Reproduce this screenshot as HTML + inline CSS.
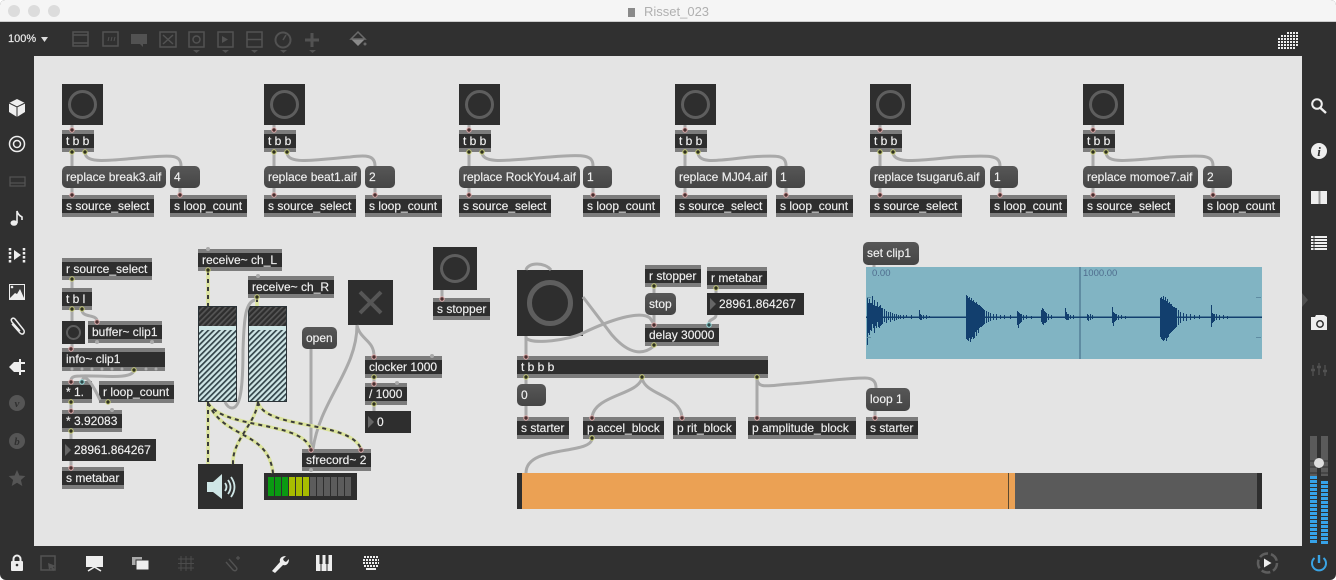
<!DOCTYPE html>
<html><head><meta charset="utf-8"><style>
html,body{margin:0;padding:0;width:1336px;height:580px;overflow:hidden;background:#fff;font-family:"Liberation Sans",sans-serif}
#w{position:absolute;left:0;top:0;width:1336px;height:580px;overflow:hidden;background:#303030;border-radius:5px 5px 6px 6px}
#tb{position:absolute;left:0;top:0;width:1336px;height:22px;background:#f5f5f5;border-bottom:1px solid #ccc;box-sizing:border-box}
#tl{position:absolute;left:644px;top:4px;font-size:13px;color:#b0b0b0;line-height:15px}
.d{position:absolute;top:5px;width:12px;height:12px;border-radius:6px;background:#dcdcdc}
#c{position:absolute;left:34px;top:56px;width:1268px;height:490px;background:#e4e4e4}
.o,.m,.n{position:absolute;height:22px;box-sizing:border-box;font-size:12px;color:#f0f0f0;white-space:nowrap;overflow:hidden;padding-left:4px;-webkit-text-stroke:.15px #f0f0f0}
.o{background:#2e2e2e;border-top:4px solid #7c7c7c;border-bottom:4px solid #7c7c7c;line-height:14px}
.m{background:linear-gradient(#575757,#454545);border-radius:5px;line-height:22px}
.n{background:#2e2e2e;line-height:22px;padding-left:12px}
.n:before{content:"";position:absolute;left:3px;top:5px;border-left:6px solid #666;border-top:6px solid transparent;border-bottom:6px solid transparent}
.b{position:absolute;background:#2e2e2e}
.b i{position:absolute;box-sizing:border-box;border-radius:50%;border:3px solid #5e5e5e}
svg{position:absolute;left:0;top:0}
#zm{position:absolute;left:8px;top:33px;font-size:11px;color:#eee;line-height:13px;-webkit-text-stroke:.15px #eee}
</style></head><body><div id="w">
<div id="tb"></div>
<div class="d" style="left:8px"></div><div class="d" style="left:28px"></div><div class="d" style="left:48px"></div>
<div id="tl">Risset_023</div>
<div id="zm">100%</div>
<div id="c"></div>

<!-- group 1 -->
<div class="b" style="left:62px;top:84px;width:41px;height:41px"><i style="left:6px;top:6px;width:29px;height:29px"></i></div>
<div class="o" style="left:62px;top:130px;width:32px">t b b</div>
<div class="m" style="left:62px;top:166px;width:104px">replace break3.aif</div>
<div class="m" style="left:170px;top:166px;width:30px">4</div>
<div class="o" style="left:62px;top:195px;width:92px">s source_select</div>
<div class="o" style="left:170px;top:195px;width:77px">s loop_count</div>
<!-- group 2 -->
<div class="b" style="left:264px;top:84px;width:41px;height:41px"><i style="left:6px;top:6px;width:29px;height:29px"></i></div>
<div class="o" style="left:264px;top:130px;width:32px">t b b</div>
<div class="m" style="left:264px;top:166px;width:97px">replace beat1.aif</div>
<div class="m" style="left:365px;top:166px;width:30px">2</div>
<div class="o" style="left:264px;top:195px;width:92px">s source_select</div>
<div class="o" style="left:365px;top:195px;width:77px">s loop_count</div>
<!-- group 3 -->
<div class="b" style="left:459px;top:84px;width:41px;height:41px"><i style="left:6px;top:6px;width:29px;height:29px"></i></div>
<div class="o" style="left:459px;top:130px;width:32px">t b b</div>
<div class="m" style="left:459px;top:166px;width:121px">replace RockYou4.aif</div>
<div class="m" style="left:583px;top:166px;width:29px">1</div>
<div class="o" style="left:459px;top:195px;width:92px">s source_select</div>
<div class="o" style="left:583px;top:195px;width:77px">s loop_count</div>
<!-- group 4 -->
<div class="b" style="left:675px;top:84px;width:41px;height:41px"><i style="left:6px;top:6px;width:29px;height:29px"></i></div>
<div class="o" style="left:675px;top:130px;width:32px">t b b</div>
<div class="m" style="left:675px;top:166px;width:97px">replace MJ04.aif</div>
<div class="m" style="left:776px;top:166px;width:29px">1</div>
<div class="o" style="left:675px;top:195px;width:92px">s source_select</div>
<div class="o" style="left:776px;top:195px;width:77px">s loop_count</div>
<!-- group 5 -->
<div class="b" style="left:870px;top:84px;width:41px;height:41px"><i style="left:6px;top:6px;width:29px;height:29px"></i></div>
<div class="o" style="left:870px;top:130px;width:32px">t b b</div>
<div class="m" style="left:870px;top:166px;width:115px">replace tsugaru6.aif</div>
<div class="m" style="left:990px;top:166px;width:28px">1</div>
<div class="o" style="left:870px;top:195px;width:92px">s source_select</div>
<div class="o" style="left:990px;top:195px;width:77px">s loop_count</div>
<!-- group 6 -->
<div class="b" style="left:1083px;top:84px;width:41px;height:41px"><i style="left:6px;top:6px;width:29px;height:29px"></i></div>
<div class="o" style="left:1083px;top:130px;width:32px">t b b</div>
<div class="m" style="left:1083px;top:166px;width:115px">replace momoe7.aif</div>
<div class="m" style="left:1203px;top:166px;width:29px">2</div>
<div class="o" style="left:1083px;top:195px;width:92px">s source_select</div>
<div class="o" style="left:1203px;top:195px;width:77px">s loop_count</div>

<!-- left column -->
<div class="o" style="left:62px;top:258px;width:90px">r source_select</div>
<div class="o" style="left:62px;top:288px;width:30px">t b l</div>
<div class="b" style="left:62px;top:321px;width:23px;height:23px"><i style="left:4px;top:4px;width:15px;height:15px;border-width:2px"></i></div>
<div class="o" style="left:88px;top:321px;width:74px">buffer~ clip1</div>
<div class="o" style="left:62px;top:348px;width:103px;height:23px">info~ clip1</div>
<div class="o" style="left:62px;top:381px;width:30px">* 1.</div>
<div class="o" style="left:99px;top:381px;width:75px">r loop_count</div>
<div class="o" style="left:62px;top:410px;width:60px">* 3.92083</div>
<div class="n" style="left:62px;top:439px;width:94px">28961.864267</div>
<div class="o" style="left:62px;top:467px;width:62px">s metabar</div>

<!-- audio column -->
<div class="o" style="left:198px;top:249px;width:84px">receive~ ch_L</div>
<div class="o" style="left:248px;top:276px;width:86px">receive~ ch_R</div>
<div class="b" style="left:433px;top:247px;width:44px;height:43px"><i style="left:7px;top:7px;width:30px;height:29px"></i></div>
<div class="o" style="left:433px;top:298px;width:57px">s stopper</div>
<div class="b" style="left:348px;top:280px;width:45px;height:45px"></div>
<div class="m" style="left:302px;top:327px;width:35px">open</div>
<div class="o" style="left:365px;top:356px;width:77px">clocker 1000</div>
<div class="o" style="left:365px;top:383px;width:42px">/ 1000</div>
<div class="n" style="left:365px;top:411px;width:46px">0</div>
<div class="o" style="left:302px;top:449px;width:69px">sfrecord~ 2</div>
<div class="b" style="left:198px;top:464px;width:45px;height:45px"></div>
<div class="b" style="left:264px;top:473px;width:93px;height:27px"></div>

<!-- right patch -->
<div class="o" style="left:645px;top:265px;width:56px">r stopper</div>
<div class="o" style="left:707px;top:267px;width:60px">r metabar</div>
<div class="m" style="left:645px;top:293px;width:31px">stop</div>
<div class="n" style="left:707px;top:293px;width:97px">28961.864267</div>
<div class="o" style="left:645px;top:324px;width:74px">delay 30000</div>
<div class="b" style="left:517px;top:270px;width:66px;height:66px"><i style="left:10px;top:10px;width:46px;height:46px;border-width:5px"></i></div>
<div class="o" style="left:517px;top:356px;width:251px">t b b b</div>
<div class="m" style="left:517px;top:384px;width:29px">0</div>
<div class="o" style="left:517px;top:417px;width:52px">s starter</div>
<div class="o" style="left:583px;top:417px;width:81px">p accel_block</div>
<div class="o" style="left:673px;top:417px;width:63px">p rit_block</div>
<div class="o" style="left:748px;top:417px;width:108px">p amplitude_block</div>
<div class="m" style="left:863px;top:242px;width:56px;height:23px">set clip1</div>
<div class="m" style="left:866px;top:388px;width:44px;height:23px">loop 1</div>
<div class="o" style="left:866px;top:417px;width:52px">s starter</div>

<svg width="1336" height="580" viewBox="0 0 1336 580" xmlns="http://www.w3.org/2000/svg">
<defs>
<pattern id="hl" width="4" height="4" patternUnits="userSpaceOnUse" patternTransform="rotate(45)"><rect width="4" height="4" fill="#cfe6e6"/><rect width="1.700" height="4" fill="#33444a"/></pattern>
<pattern id="hd" width="4" height="4" patternUnits="userSpaceOnUse" patternTransform="rotate(45)"><rect width="4" height="4" fill="#2e2e2e"/><rect width="1.700" height="4" fill="#555"/></pattern>
</defs>

<!-- gains -->
<g stroke="#2a3236" stroke-width="1">
<rect x="198.500" y="306.500" width="38" height="95" fill="url(#hl)"/>
<rect x="248.500" y="306.500" width="38" height="95" fill="url(#hl)"/>
<rect x="198.500" y="306.500" width="38" height="20" fill="url(#hd)"/>
<rect x="248.500" y="306.500" width="38" height="20" fill="url(#hd)"/>
<rect x="199" y="326" width="37" height="4" fill="#cfe6e6" stroke="none"/>
<rect x="249" y="326" width="37" height="4" fill="#cfe6e6" stroke="none"/>
</g>

<!-- X toggle -->
<path d="M360 292L381 313M381 292L360 313" stroke="#565656" stroke-width="4" fill="none"/>

<!-- speaker -->
<path d="M207 482h6l9-8v25l-9-7h-6z" fill="#cfe6e6"/>
<path d="M225 483q3 4 0 8M228 480q5 7 0 14M231 477q7 10 0 20" fill="none" stroke="#cfe6e6" stroke-width="1.800"/>

<!-- meter -->
<g>
<rect x="268" y="477" width="6" height="19" fill="#0a9a12"/><rect x="275" y="477" width="6" height="19" fill="#0a9a12"/><rect x="282" y="477" width="6" height="19" fill="#0a9a12"/>
<rect x="289" y="477" width="6" height="19" fill="#a8bd00"/><rect x="296" y="477" width="6" height="19" fill="#a8bd00"/><rect x="303" y="477" width="6" height="19" fill="#a8bd00"/>
<g fill="#5c5c5c"><rect x="310" y="477" width="6" height="19"/><rect x="317" y="477" width="6" height="19"/><rect x="324" y="477" width="6" height="19"/><rect x="331" y="477" width="6" height="19"/><rect x="338" y="477" width="6" height="19"/><rect x="345" y="477" width="6" height="19"/></g>
</g>

<!-- slider -->
<rect x="517" y="473" width="745" height="36" fill="#2e2e2e"/>
<rect x="522" y="473" width="493" height="36" fill="#eba154"/>
<rect x="1015" y="473" width="242" height="36" fill="#5a5a5a"/>
<rect x="1008" y="473" width="1" height="36" fill="#5c4a30"/>

<!-- waveform -->
<rect x="866" y="267" width="396" height="92" fill="#81b4c3"/>
<rect x="1079" y="267" width="2" height="92" fill="#5f8ca2"/>
<text x="872" y="276" font-size="9.500" fill="#4f6d8e" font-family="Liberation Sans">0.00</text>
<text x="1083" y="276" font-size="9.500" fill="#4f6d8e" font-family="Liberation Sans">1000.00</text>
<path transform="translate(.5 0)" d="M867 298V345M868 303V333M869 299V335M870 303V330M871 303V331M872 296V324M873 305V328M874 300V333M875 306V326M876 306V328M877 302V322M878 307V327M879 306V328M880 305V326M881 308V325M882 308V324M884 309V322M886 311V323M888 312V320M890 312V322M892 313V320M894 314V321M896 314V320M898 315V319M900 315V319M903 315V319M906 315V318M911 315V319M919 310V319M920 314V320M921 315V320M923 315V319M926 315V319M929 316V318
M966 295V339M967 296V340M968 298V341M969 297V338M970 300V342M971 298V339M972 301V337M973 300V339M974 302V338M975 303V332M976 302V336M977 304V330M978 305V333M979 305V328M980 306V327M981 307V327M982 308V326M983 309V325M984 310V324M986 311V323M988 312V322M990 313V321M993 314V320M996 314V320M1000 315V319M1004 315V319M1010 315V319
M1017 311V325M1018 312V328M1019 313V324M1020 314V323M1021 314V322M1023 315V320M1026 315V319M1031 316V319
M1041 310V322M1042 308V324M1043 309V325M1044 311V323M1045 312V323M1046 313V322M1048 314V320M1051 315V319
M1065 308V319M1066 312V320M1067 314V320M1068 314V320M1070 315V319M1073 315V319
M1087 314V320M1088 315V321M1090 314V320M1092 315V319
M1112 307V323M1113 312V326M1114 313V322M1115 314V321M1116 314V320M1118 315V320M1121 315V319M1125 316V319
M1160 298V337M1161 297V339M1162 299V340M1163 296V341M1164 300V340M1165 297V338M1166 301V341M1167 299V338M1168 303V337M1169 302V334M1170 304V333M1171 304V332M1172 306V331M1173 307V330M1174 307V329M1175 308V328M1176 308V327M1178 310V325M1180 312V323M1183 313V321M1186 314V321M1190 314V320M1194 315V319M1199 315V319
M1211 305V327M1212 313V323M1213 314V322M1214 314V321M1216 314V320M1219 315V320M1223 315V319M1227 316V319" stroke="#123f6e" stroke-width="1" fill="none"/>
<rect x="866" y="316.500" width="396" height="1.500" fill="#123f6e"/>
<g fill="#5f8ca2"><rect x="1256" y="297" width="5" height="1"/><rect x="1256" y="337" width="5" height="1"/><rect x="867" y="297" width="4" height="1"/><rect x="867" y="337" width="4" height="1"/></g>

<!-- grey cords -->
<g fill="none" stroke="#a9a9a9" stroke-width="3">
<path d="M72 125V130M72 152V166M72 188V195M85 152C85 165 110 160 150 157C172 155 181 155 181 166M180 188V195"/>
<path d="M274 125V130M274 152V166M274 188V195M287 152C287 165 312 160 350 157C366 155 375 155 375 166M375 188V195"/>
<path d="M469 125V130M469 152V166M469 188V195M482 152C482 165 510 160 550 157C585 154 593 155 593 166M593 188V195"/>
<path d="M685 125V130M685 152V166M685 188V195M698 152C698 165 720 160 750 157C778 155 786 155 786 166M786 188V195"/>
<path d="M880 125V130M880 152V166M880 188V195M893 152C893 165 920 160 955 157C990 155 1000 155 1000 166M1000 188V195"/>
<path d="M1093 125V130M1093 152V166M1093 188V195M1106 152C1106 165 1130 160 1170 157C1205 155 1213 155 1213 166M1213 188V195"/>
<path d="M72 280V288M72 310V321M82 310C82 318 97 314 97 321M72 344V348M134 371C130 380 100 375 80 376C72 376 71 378 71 381M100 400C93 385 85 372 82 381M71 403V410M71 432V439M71 461V467"/>
<path d="M258 300C245 298 244 320 243 350C243 390 240 408 232 408C228 408 226 404 225 402"/>
<path d="M311 349V449M357 325C357 370 320 400 313 449M357 325C360 340 374 340 374 356M374 378V383M374 405V411M442 290V298"/>
<path d="M526 336V356M526 338C532 345 570 340 583 333C610 320 640 310 650 318L654 324M654 346C640 358 625 350 612 335L583 297M526 270C528 262 545 262 551 270M654 287V293M654 315V324M716 289V293M716 315C716 320 709 318 709 324"/>
<path d="M526 378V384M526 406V417M642 378C638 395 595 395 592 417M642 378C645 395 680 395 682 417M757 378V417M757 378C757 390 770 385 790 384C820 382 845 378 865 378C875 378 876 384 876 388M875 411V417M592 439C590 455 526 445 526 473M874 265V267"/>
</g>

<!-- signal cords -->
<g fill="none" stroke="#dbe39c" stroke-width="3.500">
<path d="M208 271V306M257 298V306M208 402V464M208 403C225 430 300 420 311 449M208 403C225 440 268 430 273 473M258 402C255 425 232 440 233 464M258 402C265 430 350 420 361 449"/>
</g>
<g fill="none" stroke="#3a3a3a" stroke-width="2" stroke-dasharray="4 4">
<path d="M208 271V306M257 298V306M208 402V464M208 403C225 430 300 420 311 449M208 403C225 440 268 430 273 473M258 402C255 425 232 440 233 464M258 402C265 430 350 420 361 449"/>
</g>

<!-- inlets -->
<g fill="#4a3030" stroke="#dba9a9" stroke-width="1">
<circle cx="72" cy="130" r="2.200"/><circle cx="72" cy="195" r="2.200"/><circle cx="180" cy="195" r="2.200"/>
<circle cx="274" cy="130" r="2.200"/><circle cx="274" cy="195" r="2.200"/><circle cx="375" cy="195" r="2.200"/>
<circle cx="469" cy="130" r="2.200"/><circle cx="469" cy="195" r="2.200"/><circle cx="593" cy="195" r="2.200"/>
<circle cx="685" cy="130" r="2.200"/><circle cx="685" cy="195" r="2.200"/><circle cx="786" cy="195" r="2.200"/>
<circle cx="880" cy="130" r="2.200"/><circle cx="880" cy="195" r="2.200"/><circle cx="1000" cy="195" r="2.200"/>
<circle cx="1093" cy="130" r="2.200"/><circle cx="1093" cy="195" r="2.200"/><circle cx="1213" cy="195" r="2.200"/>
<circle cx="97" cy="322" r="2.200"/><circle cx="71" cy="349" r="2.200"/><circle cx="71" cy="382" r="2.200"/><circle cx="71" cy="411" r="2.200"/><circle cx="71" cy="468" r="2.200"/>
<circle cx="311" cy="450" r="2.200"/><circle cx="361" cy="450" r="2.200"/><circle cx="374" cy="357" r="2.200"/><circle cx="374" cy="384" r="2.200"/><circle cx="442" cy="299" r="2.200"/>
<circle cx="654" cy="325" r="2.200"/><circle cx="526" cy="357" r="2.200"/><circle cx="526" cy="418" r="2.200"/><circle cx="592" cy="418" r="2.200"/><circle cx="682" cy="418" r="2.200"/><circle cx="757" cy="418" r="2.200"/><circle cx="875" cy="418" r="2.200"/>
</g>
<circle cx="82" cy="382" r="2.200" fill="#304a4a" stroke="#9dd" stroke-width="1"/><circle cx="709" cy="325" r="2.200" fill="#304a4a" stroke="#9dd" stroke-width="1"/>

<!-- outlets -->
<g fill="#2e3020" stroke="#c7cc78" stroke-width="1">
<circle cx="72" cy="152" r="2.200"/><circle cx="85" cy="152" r="2.200"/><circle cx="274" cy="152" r="2.200"/><circle cx="287" cy="152" r="2.200"/>
<circle cx="469" cy="152" r="2.200"/><circle cx="482" cy="152" r="2.200"/><circle cx="685" cy="152" r="2.200"/><circle cx="698" cy="152" r="2.200"/>
<circle cx="880" cy="152" r="2.200"/><circle cx="893" cy="152" r="2.200"/><circle cx="1093" cy="152" r="2.200"/><circle cx="1106" cy="152" r="2.200"/>
<circle cx="72" cy="279" r="2.200"/><circle cx="72" cy="309" r="2.200"/><circle cx="82" cy="309" r="2.200"/><circle cx="134" cy="370" r="2.200"/><circle cx="108" cy="402" r="2.200"/><circle cx="71" cy="402" r="2.200"/><circle cx="71" cy="431" r="2.200"/>
<circle cx="208" cy="270" r="2.200"/><circle cx="257" cy="297" r="2.200"/><circle cx="374" cy="377" r="2.200"/><circle cx="374" cy="404" r="2.200"/>
<circle cx="654" cy="286" r="2.200"/><circle cx="716" cy="288" r="2.200"/><circle cx="654" cy="345" r="2.200"/><circle cx="526" cy="377" r="2.200"/><circle cx="642" cy="377" r="2.200"/><circle cx="757" cy="377" r="2.200"/><circle cx="592" cy="438" r="2.200"/>
</g>
<!-- unused nubs -->
<g fill="#aaa"><circle cx="208" cy="249" r="2"/><circle cx="258" cy="276" r="2"/><circle cx="97" cy="342" r="2"/><circle cx="152" cy="342" r="2"/><circle cx="432" cy="356" r="2"/><circle cx="397" cy="383" r="2"/><circle cx="311" cy="470" r="2"/><circle cx="112" cy="410" r="2"/>
<circle cx="72" cy="369" r="1.500"/><circle cx="82" cy="369" r="1.500"/><circle cx="92" cy="369" r="1.500"/><circle cx="102" cy="369" r="1.500"/><circle cx="112" cy="369" r="1.500"/><circle cx="122" cy="369" r="1.500"/><circle cx="146" cy="369" r="1.500"/><circle cx="156" cy="369" r="1.500"/></g>

<!-- title icon -->
<rect x="628" y="8" width="7" height="9" fill="#8a8a8a"/>

<!-- toolbar -->
<path d="M41 37h7l-3.500 5z" fill="#ddd"/>
<g fill="none" stroke="#525252" stroke-width="1.500">
<rect x="73" y="32" width="15" height="14"/><path d="M73 35h15M73 43h15"/>
<rect x="103" y="32" width="15" height="14"/><path d="M108 41l1-4M111 41l1-4M114 41l1-4" stroke-width="1"/>
<rect x="160" y="32" width="16" height="15"/><path d="M163 35l10 9M173 35l-10 9"/>
<rect x="189" y="32" width="15" height="15"/><circle cx="196.500" cy="39.500" r="3.500"/>
<rect x="218" y="32" width="15" height="15"/>
<rect x="247" y="32" width="15" height="15"/><path d="M247 39.500h15"/>
<circle cx="283" cy="40" r="7.500" stroke-width="2"/><path d="M283 40l3-5"/>
</g>
<path d="M131 34h16v10h-4v3l-3-3h-9z" fill="#525252"/>
<path d="M222 36l6 3.500-6 3.500z" fill="#525252"/>
<path d="M310.500 33h3v5.500h5.500v3h-5.500v5.500h-3v-5.500h-5.500v-3h5.500z" fill="#525252"/>
<path d="M351 39l7 7 7-7z" fill="#8a8a8a"/><path d="M351 39l7-7 7 7z" fill="none" stroke="#6a6a6a" stroke-width="1.500"/><circle cx="365" cy="44" r="1.500" fill="#6a6a6a"/>
<g fill="#525252"><path d="M193 50h7l-3.500 3z"/><path d="M222 50h7l-3.500 3z"/><path d="M251 50h7l-3.500 3z"/><path d="M280 50h7l-3.500 3z"/><path d="M309 50h7l-3.500 3z"/></g>
<!-- grid top right -->
<g stroke="#eee" stroke-width="2" stroke-dasharray="2 1" fill="none">
<path d="M1279 49V37M1282 49V34M1285 49V34M1288 49V31M1291 49V31M1294 49V31M1297 46V31"/>
</g>

<!-- left sidebar -->
<path d="M17 99l8 4v9l-8 5-8-5v-9z" fill="#eee"/><path d="M9 103l8 4 8-4M17 107v10" stroke="#303030" stroke-width="1" fill="none"/>
<circle cx="17" cy="144" r="7.500" fill="none" stroke="#eee" stroke-width="1.500"/><circle cx="17" cy="144" r="3.500" fill="none" stroke="#eee" stroke-width="1.500"/>
<path d="M10 177h15v9h-15zM10 183h15" fill="none" stroke="#525252" stroke-width="1.300"/>
<ellipse cx="14" cy="223" rx="3.500" ry="2.800" fill="#eee"/><path d="M17 223V211q1 4 5 6v3" fill="none" stroke="#eee" stroke-width="1.600"/>
<path d="M14 250l7 5-7 5z" fill="#eee"/><path d="M10 248v15M24 248v15" stroke="#eee" stroke-width="2.500" stroke-dasharray="2.500 1.500" fill="none"/>
<rect x="9" y="284" width="16" height="16" fill="#eee"/><rect x="10" y="285" width="14" height="13" fill="#3a3a3a"/><circle cx="12" cy="287" r="1.300" fill="#eee"/><path d="M10 298l5-5 2 1 3-5 4 9z" fill="#eee"/>
<path d="M12 324l8 9c3 3 6-1 3-4l-8-10c-2-2-5 0-3 3l8 9" fill="none" stroke="#eee" stroke-width="1.500"/>
<path d="M9 367l5-5h5v-3h2v3h4v2h-4v6h4v2h-4v3h-2v-3h-5z" fill="#eee"/>
<circle cx="17" cy="403" r="8" fill="#555"/><text x="17" y="407" font-size="11" font-style="italic" font-weight="bold" fill="#303030" text-anchor="middle" font-family="Liberation Serif">v</text>
<circle cx="17" cy="441" r="8" fill="#555"/><text x="17" y="445" font-size="11" font-style="italic" font-weight="bold" fill="#303030" text-anchor="middle" font-family="Liberation Serif">b</text>
<path d="M17 470l2.400 5.500 6 .5-4.500 4 1.400 6-5.300-3.200-5.300 3.200 1.400-6-4.500-4 6-.5z" fill="#555"/>

<!-- bottom -->
<path d="M13.500 561v-3a3.500 3.500 0 0 1 7 0v3" transform="translate(0 1)" fill="none" stroke="#eee" stroke-width="2"/><rect x="11" y="561" width="12" height="10" rx="1" fill="#eee"/><circle cx="17" cy="565" r="1.300" fill="#303030"/>
<rect x="41" y="556" width="14" height="14" fill="none" stroke="#525252" stroke-width="1.500"/><path d="M48 563l8 3-3 1 2 3-2 1-2-3-2 2z" fill="#525252"/>
<rect x="86" y="556" width="17" height="11" fill="#eee"/><path d="M88 571l6.500-4 6.500 4" fill="none" stroke="#eee" stroke-width="1.600"/>
<rect x="132" y="557" width="10" height="8" fill="#aaa"/><rect x="136" y="560" width="13" height="10" fill="#eee" stroke="#303030"/>
<path d="M181 556v15M186 556v15M191 556v15M178 559h16M178 563.500h16M178 568h16" stroke="#4c4c4c" stroke-width="1" fill="none"/>
<path d="M226 562l7 8c3 2 5-1 3-3l-7-8" fill="none" stroke="#525252" stroke-width="1.400"/><path d="M236 558h4M238 556v4" stroke="#525252" stroke-width="1.200"/>
<path d="M272 571l8-9c-1-4 2-6 6-6l-3 3 1 2 2 1 3-3c0 4-2 7-6 6l-8 8z" fill="#eee"/>
<rect x="316" y="555" width="16" height="16" fill="#eee"/><path d="M321 555v16M327 555v16" stroke="#303030" stroke-width="1"/><rect x="319.500" y="555" width="3" height="9" fill="#303030"/><rect x="325.500" y="555" width="3" height="9" fill="#303030"/>
<g stroke="#eee" stroke-width="2" stroke-dasharray="2 1" fill="none"><path d="M364 557h14M363 560h16M363 563h16M364 566h14"/></g><rect x="366" y="568" width="10" height="2" fill="#eee"/>
<circle cx="1267.500" cy="563" r="9.500" fill="none" stroke="#5e5e5e" stroke-width="2.500" stroke-dasharray="9 3"/><path d="M1264 558.500l7.500 4.500-7.500 4.500z" fill="#eee"/>
<path d="M1314.500 558a7 7 0 1 0 9 0" fill="none" stroke="#3aa4e4" stroke-width="2"/><path d="M1319 555v8" stroke="#3aa4e4" stroke-width="2.400"/>

<!-- right sidebar -->
<circle cx="1317" cy="104" r="4.800" fill="none" stroke="#eee" stroke-width="2"/><path d="M1320.500 108l5.500 5" stroke="#eee" stroke-width="2.400"/>
<circle cx="1319" cy="151" r="8" fill="#eee"/><text x="1319" y="156" font-size="13" font-weight="bold" font-style="italic" fill="#303030" text-anchor="middle" font-family="Liberation Serif">i</text>
<rect x="1311" y="191" width="16" height="13" fill="#eee"/><rect x="1318.500" y="191" width="2" height="13" fill="#999"/>
<path d="M1311 237h16M1311 240h16M1311 243h16M1311 246h16M1311 249h16" stroke="#eee" stroke-width="2"/><path d="M1314 236v15" stroke="#303030" stroke-width="1"/>
<path d="M1302 293l6 7-6 7z" fill="#4e4e4e"/>
<path d="M1311 317h4l1-2h8l3 2v13h-16z" fill="#eee"/><circle cx="1320" cy="324" r="3.200" fill="none" stroke="#303030" stroke-width="1.500"/>
<path d="M1313 365v11M1319 363v12M1325 365v11" stroke="#525252" stroke-width="1.300"/><path d="M1311 370h4M1317 367h4M1323 371h4" stroke="#525252" stroke-width="2.500"/>

<!-- level -->
<rect x="1310" y="436" width="7" height="40" fill="#5a5a5a"/><rect x="1321" y="436" width="7" height="40" fill="#5a5a5a"/>
<path d="M1310 461h18M1310 467h18M1310 473h18" stroke="#303030" stroke-width="1"/>
<path d="M1313.500 476V544" stroke="#36a2e8" stroke-width="7" stroke-dasharray="3 1"/>
<path d="M1324.500 481V544" stroke="#36a2e8" stroke-width="7" stroke-dasharray="3 1"/>
<rect x="1317" y="436" width="4" height="108" fill="#303030"/>
<circle cx="1319" cy="463" r="5" fill="#ddd"/>
</svg>
</div></body></html>
